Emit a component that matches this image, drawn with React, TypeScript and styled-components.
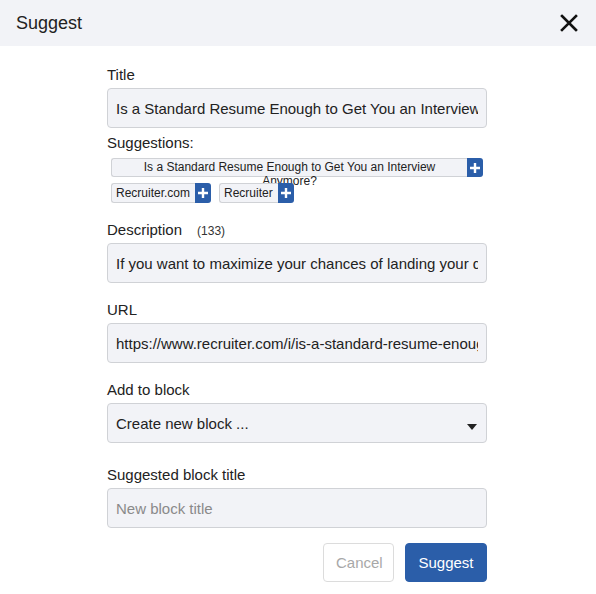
import React from "react";
import styled, { createGlobalStyle } from "styled-components";

const GlobalStyle = createGlobalStyle`
  html, body {
    margin: 0;
    padding: 0;
    background: #ffffff;
  }
  body {
    font-family: "Liberation Sans", Arial, sans-serif;
    color: #212529;
  }
  * {
    box-sizing: border-box;
  }
`;

const suggestions = ["Recruiter.com", "Recruiter"];

export default function App() {
  return (
    <>
      <GlobalStyle />
      <Modal>
        <Header>
          <HeaderTitle>Suggest</HeaderTitle>
          <CloseButton aria-label="Close">
            <svg width="18" height="18" viewBox="0 0 18 18">
              <path
                d="M2 2 L16 16 M16 2 L2 16"
                stroke="#111"
                strokeWidth="2.6"
                strokeLinecap="square"
              />
            </svg>
          </CloseButton>
        </Header>

        <Form>
          <Field>
            <Label>Title</Label>
            <Input defaultValue="Is a Standard Resume Enough to Get You an Interview Anymore?" />
          </Field>

          <SuggestionsLabel>Suggestions:</SuggestionsLabel>
          <SuggestionList>
            <Chip wide>
              <ChipText wide>
                Is a Standard Resume Enough to Get You an Interview Anymore?
              </ChipText>
              <PlusButton>
                <PlusIcon />
              </PlusButton>
            </Chip>
            {suggestions.map((s) => (
              <Chip key={s}>
                <ChipText>{s}</ChipText>
                <PlusButton>
                  <PlusIcon />
                </PlusButton>
              </Chip>
            ))}
          </SuggestionList>

          <Field $top={17}>
            <Label>
              Description <Count>(133)</Count>
            </Label>
            <Input defaultValue="If you want to maximize your chances of landing your dream job, you need a resume that stands out from the rest." />
          </Field>

          <Field $top={17}>
            <Label>URL</Label>
            <Input defaultValue="https://www.recruiter.com/i/is-a-standard-resume-enough-to-get-you-an-interview-anymore/" />
          </Field>

          <Field $top={17}>
            <Label>Add to block</Label>
            <SelectBox>
              <span>Create new block ...</span>
              <Caret />
            </SelectBox>
          </Field>

          <Field $top={22}>
            <Label>Suggested block title</Label>
            <Input placeholder="New block title" />
          </Field>

          <Actions>
            <CancelButton>Cancel</CancelButton>
            <PrimaryButton>Suggest</PrimaryButton>
          </Actions>
        </Form>
      </Modal>
    </>
  );
}

function PlusIcon() {
  return (
    <svg width="12" height="12" viewBox="0 0 12 12">
      <path d="M6 1 V11 M1 6 H11" stroke="#fff" strokeWidth="2.4" />
    </svg>
  );
}

const Modal = styled.div`
  width: 596px;
  height: 594px;
  background: #fff;
`;

const Header = styled.div`
  height: 46px;
  background: #f2f3f7;
  display: flex;
  align-items: center;
  justify-content: space-between;
  padding: 0 16px 0 16px;
`;

const HeaderTitle = styled.h1`
  margin: 0;
  font-size: 18px;
  font-weight: 400;
  color: #222;
  line-height: 24px;
`;

const CloseButton = styled.button`
  border: none;
  background: transparent;
  padding: 0;
  width: 20px;
  height: 20px;
  display: flex;
  align-items: center;
  justify-content: center;
  cursor: pointer;
  margin-right: 1px;
`;

const Form = styled.div`
  width: 380px;
  margin-left: 107px;
  padding-top: 19px;
`;

const Field = styled.div<{ $top?: number }>`
  display: flex;
  flex-direction: column;
  margin-top: ${(p) => p.$top ?? 0}px;
`;

const Label = styled.label`
  display: flex;
  align-items: baseline;
  height: 20px;
  font-size: 15px;
  line-height: 20px;
  color: #222;
  margin-bottom: 3px;
`;

const Count = styled.span`
  font-size: 12px;
  line-height: 20px;
  color: #333;
  margin-left: 15px;
`;

const Input = styled.input`
  width: 100%;
  height: 40px;
  border: 1px solid #d0d2d6;
  border-radius: 4px;
  background: #f2f3f7;
  padding: 0 8px;
  font-family: "Liberation Sans", Arial, sans-serif;
  font-size: 15px;
  color: #222;
  outline: none;

  &::placeholder {
    color: #8a8a8a;
  }
`;

const SuggestionsLabel = styled.div`
  font-size: 15px;
  line-height: 20px;
  color: #222;
  margin-top: 5px;
`;

const SuggestionList = styled.div`
  display: flex;
  flex-wrap: wrap;
  gap: 6px 8px;
  padding: 0 4px;
  margin-top: 5px;
`;

const Chip = styled.div<{ wide?: boolean }>`
  display: flex;
  height: ${(p) => (p.wide ? 19 : 20)}px;
  width: ${(p) => (p.wide ? "100%" : "auto")};
`;

const ChipText = styled.div<{ wide?: boolean }>`
  flex: ${(p) => (p.wide ? 1 : "none")};
  background: #f2f3f7;
  border: 1px solid #d0d2d6;
  border-right: none;
  border-radius: 3px 0 0 3px;
  font-size: 12px;
  line-height: ${(p) => (p.wide ? 14 : 18)}px;
  padding: ${(p) => (p.wide ? "1px 8px 0" : "0 5px 0 4px")};
  text-align: center;
  color: #222;
  white-space: ${(p) => (p.wide ? "normal" : "nowrap")};
`;

const PlusButton = styled.button`
  width: 16px;
  height: 100%;
  border: none;
  padding: 0;
  background: #2b5ea9;
  border-radius: 0 3px 3px 0;
  display: flex;
  align-items: center;
  justify-content: center;
  cursor: pointer;
`;

const SelectBox = styled.div`
  height: 40px;
  border: 1px solid #d0d2d6;
  border-radius: 4px;
  background: #f2f3f7;
  padding: 0 9px 0 8px;
  display: flex;
  align-items: center;
  justify-content: space-between;
  font-size: 15px;
  color: #222;
`;

const Caret = styled.span`
  width: 0;
  height: 0;
  margin-top: 8px;
  border-left: 5px solid transparent;
  border-right: 5px solid transparent;
  border-top: 6px solid #222;
`;

const Actions = styled.div`
  display: flex;
  justify-content: flex-end;
  gap: 11px;
  margin-top: 15px;
`;

const BaseButton = styled.button`
  height: 39px;
  border-radius: 4px;
  font-family: "Liberation Sans", Arial, sans-serif;
  font-size: 15px;
  padding: 0 12px;
  cursor: pointer;
`;

const CancelButton = styled(BaseButton)`
  width: 71px;
  background: #fff;
  border: 1px solid #dcdcdc;
  color: #a8a8a8;
`;

const PrimaryButton = styled(BaseButton)`
  width: 82px;
  background: #2b5ea9;
  border: 1px solid #2b5ea9;
  color: #fff;
`;
